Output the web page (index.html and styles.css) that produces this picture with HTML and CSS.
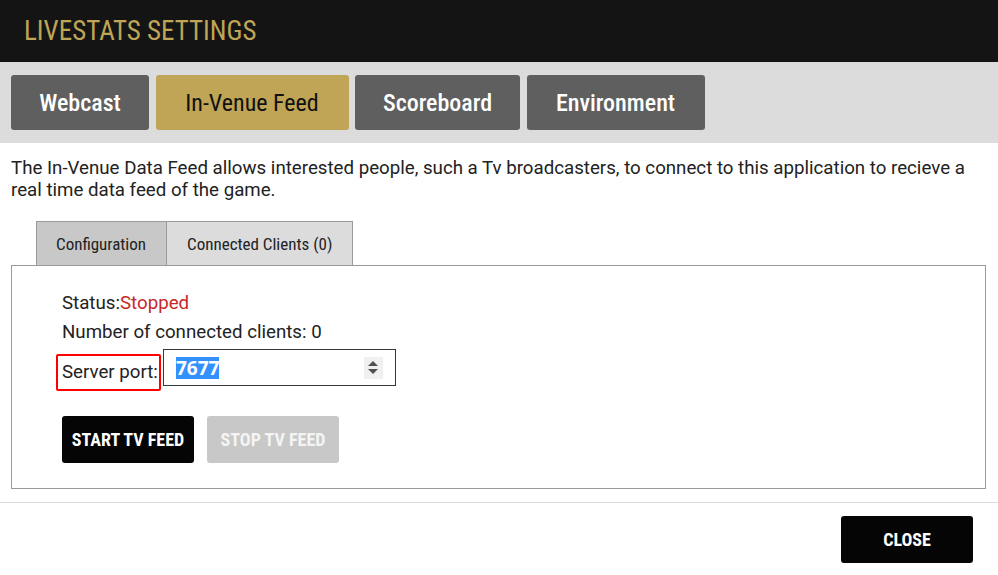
FILE: index.html
```html
<!DOCTYPE html>
<html>
<head>
<meta charset="utf-8">
<link rel="stylesheet" href="styles.css">
</head>
<body>
<div class="header"><h1 class="title">LIVESTATS SETTINGS</h1></div>
<div class="navbar">
  <button class="nav-btn w-webcast">Webcast</button>
  <button class="nav-btn active w-venue">In-Venue Feed</button>
  <button class="nav-btn w-score">Scoreboard</button>
  <button class="nav-btn w-env">Environment</button>
</div>
<div class="content">
  <p class="desc">The In-Venue Data Feed allows interested people, such a Tv broadcasters, to connect to this application to recieve a real time data feed of the game.</p>
  <div class="subtabs">
    <div class="subtab selected">Configuration</div>
    <div class="subtab">Connected Clients (0)</div>
  </div>
  <div class="panel">
    <div class="line">Status:<span class="stopped">Stopped</span></div>
    <div class="line">Number of connected clients: 0</div>
    <div class="port-row">
      <label class="port-label">Server port:</label>
      <div class="port-input">
        <span class="port-value">7677</span>
        <span class="spinner"><span class="up"></span><span class="down"></span></span>
      </div>
    </div>
    <div class="actions">
      <button class="btn btn-dark">START TV FEED</button>
      <button class="btn btn-disabled">STOP TV FEED</button>
    </div>
  </div>
</div>
<div class="footer">
  <button class="btn btn-dark close">CLOSE</button>
</div>
</body>
</html>
```
FILE: styles.css
```css
html, body {
  margin: 0;
  padding: 0;
  background: #ffffff;
  font-family: Roboto, "Liberation Sans", sans-serif;
  color: #222;
}
.header {
  height: 62px;
  background: #141414;
  display: flex;
  align-items: center;
  padding-left: 24px;
}
.title {
  margin: 0;
  font-family: "Roboto Condensed", "Liberation Sans Narrow", "DejaVu Sans Condensed", sans-serif;
  font-weight: 400;
  font-size: 27px;
  color: #bfa555;
  letter-spacing: 0;
}
.navbar {
  background: #dcdcdc;
  height: 81px;
  box-sizing: border-box;
  padding: 13px 11px;
  display: flex;
  gap: 6.5px;
}
.nav-btn {
  height: 55px;
  border: none;
  border-radius: 3px;
  background: #5f5f5f;
  color: #fff;
  font-family: "Roboto Condensed", "Liberation Sans Narrow", "DejaVu Sans Condensed", sans-serif;
  font-size: 24px;
  font-weight: 500;
  padding: 0;
}
.w-webcast { width: 138px; }
.w-venue { width: 193px; }
.w-score { width: 165px; }
.w-env { width: 178px; }
.nav-btn.active {
  background: #bfa555;
  color: #111;
  font-weight: 400;
}
.content {
  padding: 0 12px 13px 11px;
}
.desc {
  margin: 0;
  padding-top: 14px;
  font-size: 18.7px;
  line-height: 22px;
  color: #222;
}
.subtabs {
  display: flex;
  margin: 20px 0 0 25px;
}
.subtab {
  height: 44px;
  box-sizing: border-box;
  border: 1px solid #9a9a9a;
  border-bottom: none;
  background: #dcdcdc;
  display: flex;
  align-items: center;
  padding: 0 20px 0 19px;
  font-family: "Roboto Condensed", "Liberation Sans Narrow", "DejaVu Sans Condensed", sans-serif;
  font-size: 17px;
  color: #222;
}
.subtab + .subtab {
  border-left: none;
  padding: 0 20px 0 20px;
}
.subtab.selected {
  background: #c8c8c8;
}
.panel {
  border: 1px solid #9a9a9a;
  padding: 23px 50px 25px 50px;
  font-size: 18.7px;
}
.line {
  height: 29px;
  line-height: 29px;
}
.stopped {
  color: #c62828;
}
.port-row {
  display: flex;
  align-items: flex-start;
  margin-top: 2px;
}
.port-label {
  margin: 5px 2px 0 -6px;
  border: 2px solid #ff0000;
  border-radius: 2px;
  padding: 0 1px 0 4px;
  height: 37px;
  box-sizing: border-box;
  line-height: 33px;
}
.port-input {
  width: 233px;
  height: 37px;
  box-sizing: border-box;
  border: 1px solid #33363d;
  display: flex;
  align-items: center;
  justify-content: space-between;
  padding: 0 12px 0 12px;
}
.port-value {
  background: #3390ff;
  color: #fff;
  font-family: "Open Sans", "DejaVu Sans", sans-serif;
  font-weight: 700;
  font-size: 19px;
  line-height: 22px;
  padding: 0;
}
.spinner {
  width: 19px;
  height: 22px;
  background: #f0f0f0;
  display: flex;
  flex-direction: column;
  align-items: center;
  justify-content: center;
  gap: 3px;
}
.up {
  width: 0; height: 0;
  border-left: 5px solid transparent;
  border-right: 5px solid transparent;
  border-bottom: 5px solid #505050;
}
.down {
  width: 0; height: 0;
  border-left: 5px solid transparent;
  border-right: 5px solid transparent;
  border-top: 5px solid #505050;
}
.actions {
  display: flex;
  gap: 13px;
  margin-top: 25px;
}
.btn {
  width: 132px;
  height: 47px;
  border: none;
  border-radius: 3px;
  font-family: "Roboto Condensed", "Liberation Sans Narrow", "DejaVu Sans Condensed", sans-serif;
  font-weight: 700;
  font-size: 18px;
  padding: 0;
}
.btn-dark {
  background: #050505;
  color: #fff;
}
.btn-disabled {
  background: #c8c8c8;
  color: #f4f4f4;
}
.footer {
  border-top: 1px solid #dcdcdc;
  display: flex;
  justify-content: flex-end;
  padding: 13px 25px 0 0;
}
```
